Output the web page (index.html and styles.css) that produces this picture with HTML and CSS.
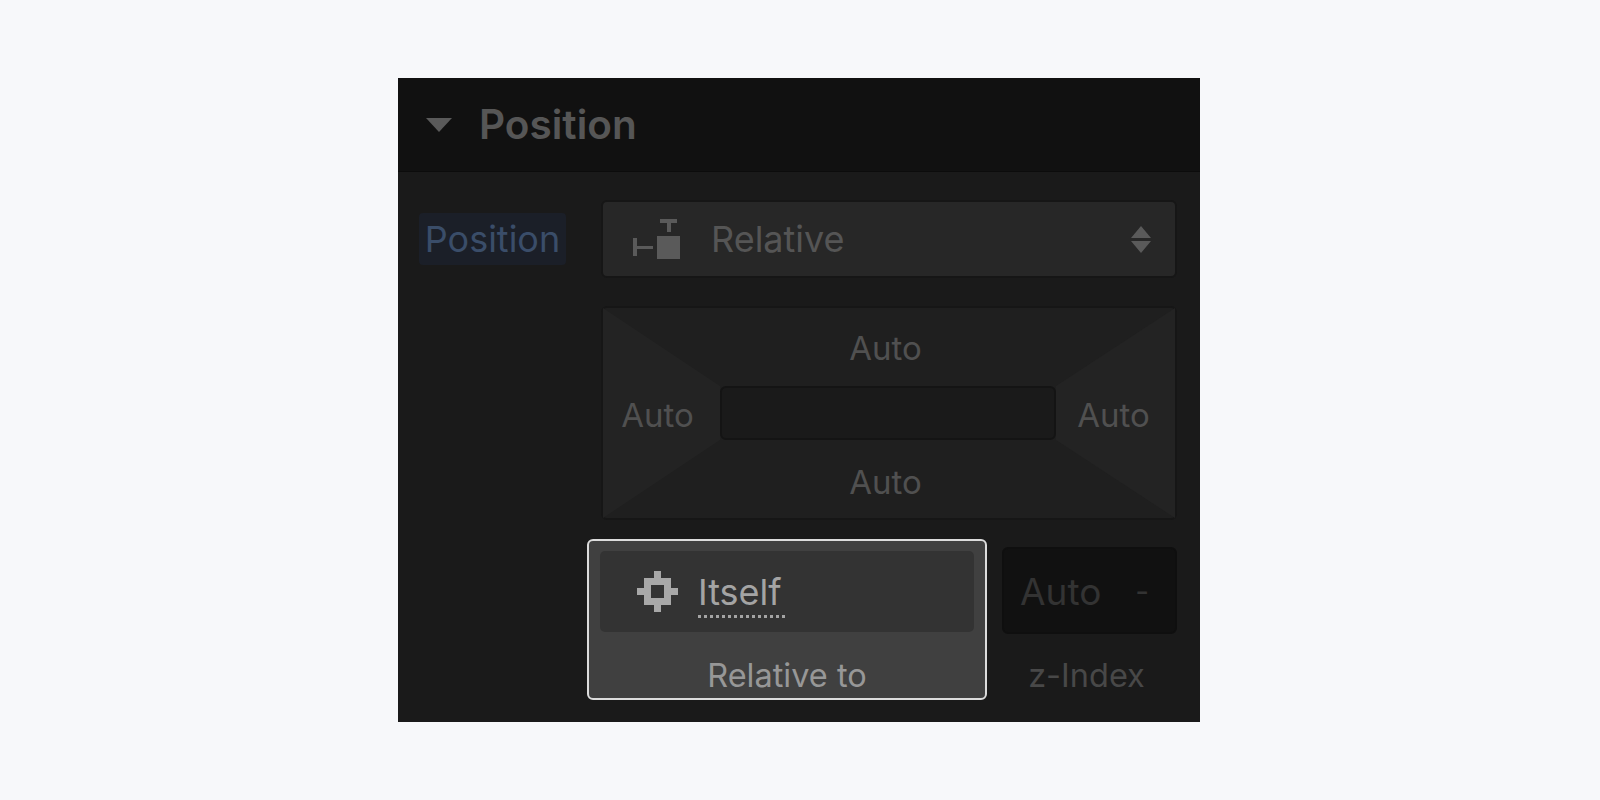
FILE: index.html
```html
<!DOCTYPE html>
<html>
	<head>
		<meta charset="UTF-8">
		<title>Position</title>
		<link rel="stylesheet" href="styles.css">
	</head>
	<body>
		<div id="panel">
			<div class="head">
				<svg class="caret" width="28" height="16" viewBox="0 0 28 16"><path d="M1 1h26L14 15z" fill="#5a5a5a"/></svg>
				<span class="head-title">Position</span>
			</div>
			<div class="body">
				<div class="row">
					<span class="label">Position</span>
					<div class="select">
						<svg class="type-icon" width="47" height="40" viewBox="0 0 47 40">
							<path d="M27 0h17v4h-6v9h-4V4h-7zM0 19h4v8h16v3H4v7H0zM24 17h23v23H24z" fill="#5a5a5a"/>
						</svg>
						<span class="select-text">Relative</span>
						<svg class="arrows" width="20" height="27" viewBox="0 0 20 27"><path d="M10 0l10 12H0zM0 15h20L10 27z" fill="#5a5a5a"/></svg>
					</div>
				</div>
				<div class="box">
					<svg class="box-bg" viewBox="0 0 572 210" preserveAspectRatio="none">
						<path d="M0 0L117 78V132L0 210zM572 0L453 78V132L572 210z" fill="#232323"/>
					</svg>
					<span class="auto top">Auto</span>
					<span class="auto left">Auto</span>
					<div class="box-inner"></div>
					<span class="auto right">Auto</span>
					<span class="auto bottom">Auto</span>
				</div>
				<div class="row-last">
					<div class="card">
						<div class="card-btn">
							<svg class="self-icon" width="41" height="41" viewBox="0 0 41 41">
								<path fill-rule="evenodd" d="M17 0h7v7h10v10h7v7h-7v10H24v7h-7v-7H7V24H0v-7h7V7h10zM14 14v13h13V14z" fill="#a8a8a8"/>
							</svg>
							<span class="self-text">Itself</span>
						</div>
						<div class="card-label">Relative to</div>
					</div>
					<div class="zcol">
						<div class="zbox">
							<span class="z-auto">Auto</span>
							<span class="z-dash">-</span>
						</div>
						<div class="z-label">z-Index</div>
					</div>
				</div>
			</div>
		</div>
	</body>
</html>
```

FILE: styles.css
```css
body {
	margin: 0;
	padding: 0;
	background: #f7f8fa;
	font-family: Inter, "Liberation Sans", sans-serif;
}
#panel {
	width: 802px;
	height: 644px;
	margin: 78px 0 0 398px;
	background: #1a1a1a;
	overflow: hidden;
}
.head {
	height: 93px;
	background: #111;
	border-bottom: 1px solid #0c0c0c;
	display: flex;
	align-items: center;
	padding-left: 27px;
}
.caret {
	margin-right: 26px;
}
.head-title {
	font-size: 40.5px;
	font-weight: 600;
	color: #565656;
}
.body {
	padding-top: 28px;
}
.row {
	display: flex;
	align-items: center;
	padding-left: 21px;
}
.label {
	width: 147px;
	height: 52px;
	line-height: 52px;
	text-align: center;
	margin-right: 35px;
	font-size: 36px;
	color: #3a4d69;
	background: #1b1f28;
	border-radius: 4px;
}
.select {
	width: 576px;
	height: 78px;
	box-sizing: border-box;
	border: 2px solid #161616;
	border-radius: 6px;
	background: #272727;
	display: flex;
	align-items: center;
	padding: 0 24px 0 30px;
}
.type-icon {
	margin-right: 31px;
}
.select-text {
	flex: 1;
	font-size: 36px;
	line-height: 44px;
	color: #555;
}
.box {
	position: relative;
	width: 576px;
	height: 214px;
	box-sizing: border-box;
	margin: 28px 0 0 203px;
	border: 2px solid #161616;
	border-radius: 6px;
	background: #1f1f1f;
	display: grid;
	grid-template-columns: 117px 336px 119px;
	grid-template-rows: 78px 54px 78px;
	justify-items: center;
	align-items: center;
}
.box-bg {
	position: absolute;
	left: 0;
	top: 0;
	width: 100%;
	height: 100%;
}
.auto {
	position: relative;
	font-size: 33px;
	color: #505050;
}
.top {
	grid-column: 2;
	grid-row: 1;
	margin: 2px 5px 0 0;
}
.left {
	grid-column: 1;
	grid-row: 2;
	margin: 3px 8px 0 0;
}
.right {
	grid-column: 3;
	grid-row: 2;
	margin: 3px 4px 0 0;
}
.bottom {
	grid-column: 2;
	grid-row: 3;
	margin: 6px 5px 0 0;
}
.box-inner {
	position: relative;
	grid-column: 2;
	grid-row: 2;
	width: 100%;
	height: 100%;
	box-sizing: border-box;
	background: #1a1a1a;
	border: 2px solid #141414;
	border-radius: 6px;
}
.row-last {
	display: flex;
	margin: 19px 0 0 189px;
}
.card {
	width: 400px;
	height: 161px;
	box-sizing: border-box;
	border: 2px solid #dcdcdc;
	border-radius: 6px;
	background: #404040;
	padding: 10px 11px 0;
	overflow: hidden;
}
.card-btn {
	height: 81px;
	background: #333;
	border-radius: 5px;
	display: flex;
	align-items: center;
	padding-left: 37px;
}
.self-icon {
	margin-right: 20px;
}
.self-text {
	font-size: 36px;
	color: #a4a4a4;
	border-bottom: 3px dotted #a4a4a4;
	line-height: 38px;
	margin-top: 8px;
	padding: 0 3px 4px 0;
}
.card-label {
	margin-top: 22px;
	text-align: center;
	font-size: 32.5px;
	line-height: 44px;
	color: #979797;
}
.zcol {
	margin: 8px 0 0 15px;
	width: 175px;
}
.zbox {
	height: 87px;
	box-sizing: border-box;
	background: #111;
	border: 2px solid #0f0f0f;
	border-radius: 6px;
	display: flex;
	align-items: center;
	padding: 0 26px 0 16px;
	justify-content: space-between;
	color: #333;
}
.z-auto {
	font-size: 37px;
	margin-top: 2px;
}
.z-dash {
	font-size: 30px;
}
.z-label {
	margin: 20px 6px 0 0;
	text-align: center;
	font-size: 32.5px;
	line-height: 44px;
	color: #484848;
}
```
